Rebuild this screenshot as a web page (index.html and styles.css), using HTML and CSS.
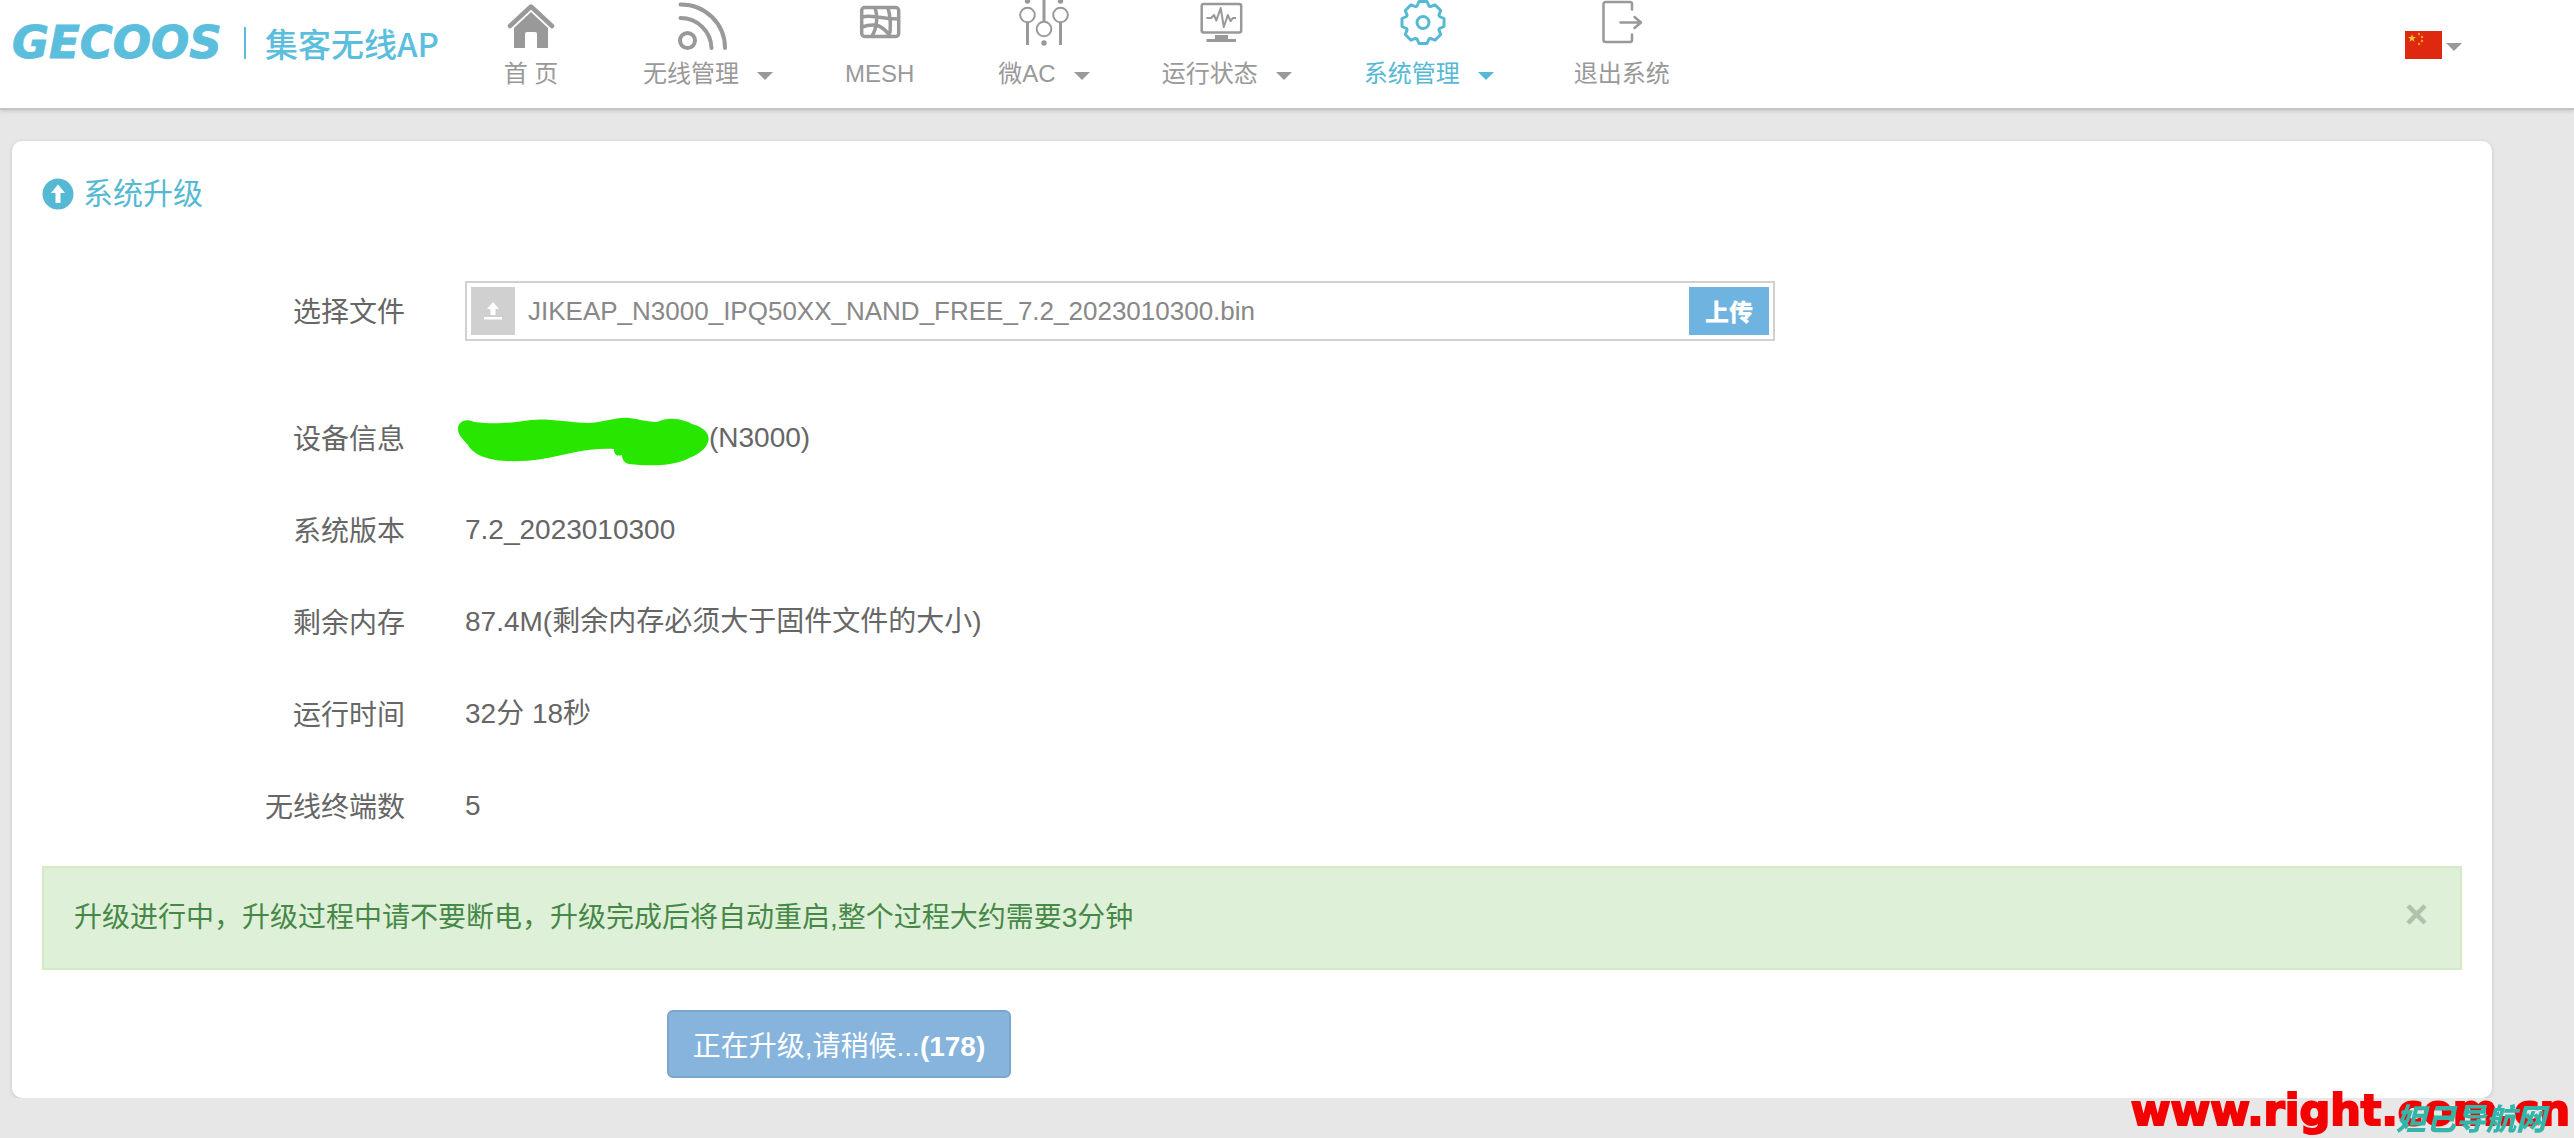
FILE: index.html
```html
<!DOCTYPE html>
<html lang="zh-CN">
<head>
<meta charset="utf-8">
<meta name="viewport" content="width=device-width, initial-scale=1">
<title>系统升级</title>
<link rel="stylesheet" href="styles.css">
</head>
<body>
<header class="topbar">
  <a class="brand" href="#">
    <span class="brand-name">GECOOS</span>
    <span class="brand-divider"></span>
    <span class="brand-product">集客无线AP</span>
  </a>
  <nav class="nav">
    <a class="nav-item" href="#">
      <svg class="nav-icon" viewBox="0 0 56 56" aria-hidden="true"><path d="M7 26 28 6.500 49 26" fill="none" stroke="currentColor" stroke-width="4.500" stroke-linecap="round" stroke-linejoin="round"/><path d="M28 12 45 28V48H34V34a2 2 0 0 0-2-2h-8a2 2 0 0 0-2 2V48H11V28Z" fill="currentColor"/></svg>
      <span class="nav-label">首 页</span>
    </a>
    <a class="nav-item has-menu" href="#">
      <svg class="nav-icon" viewBox="0 0 56 56" aria-hidden="true"><g fill="none" stroke="currentColor" stroke-width="4" stroke-linecap="round"><circle cx="13.500" cy="40.500" r="7.500"/><path d="M6.500 18A31 31 0 0 1 37.500 48M6.500 4.500A44 44 0 0 1 51 48"/></g></svg>
      <span class="nav-label">无线管理<i class="caret"></i></span>
    </a>
    <a class="nav-item" href="#">
      <svg class="nav-icon" viewBox="0 0 56 56" aria-hidden="true"><g fill="none" stroke="currentColor" stroke-width="3.500"><rect x="9.700" y="7.500" width="37" height="29" rx="3"/><path d="M23 8C26 16 25 28 20 36M36 8C38 15 39 23 38 33M10 17C20 14 26 19 47 19M10 27C24 22 31 26 39 37"/></g></svg>
      <span class="nav-label">MESH</span>
    </a>
    <a class="nav-item has-menu" href="#">
      <svg class="nav-icon" viewBox="0 0 56 56" aria-hidden="true"><g fill="none" stroke="currentColor" stroke-width="2"><circle cx="17.500" cy="15" r="7.300"/><circle cx="34" cy="29" r="7.300"/><circle cx="50.500" cy="15" r="7.300"/><path d="M17.500 22.500V45M50.500 22.500V45M34 0V21.500" stroke-width="3"/></g><g fill="currentColor"><circle cx="17.500" cy="1" r="2.700"/><circle cx="50.500" cy="1" r="2.700"/><circle cx="34" cy="43" r="2.700"/></g></svg>
      <span class="nav-label">微AC<i class="caret"></i></span>
    </a>
    <a class="nav-item has-menu" href="#">
      <svg class="nav-icon" viewBox="0 0 56 56" aria-hidden="true"><g fill="none" stroke="currentColor" stroke-width="2.500" stroke-linejoin="round"><rect x="8.700" y="4" width="39.500" height="28.500" rx="2"/><path d="M13.400 18H18.200L21 15 23.300 20.600 27.700 8 30.800 27 34.800 15 37.500 21 40 18H43" stroke-width="2"/></g><path d="M22 35H35V39H43V42H13.500V39H22Z" fill="currentColor"/></svg>
      <span class="nav-label">运行状态<i class="caret"></i></span>
    </a>
    <a class="nav-item has-menu is-active" href="#" aria-current="page">
      <svg class="nav-icon" viewBox="0 0 56 56" aria-hidden="true"><g transform="translate(28 22.500)" fill="none" stroke="currentColor" stroke-width="3" stroke-linejoin="round"><path d="M-4-21 4-21 6-16.500 7.400-15.900 12-17.700 17.700-12 15.900-7.400 16.500-6 21-4 21 4 16.500 6 15.900 7.400 17.700 12 12 17.700 7.400 15.900 6 16.500 4 21-4 21-6 16.500-7.400 15.900-12 17.700-17.700 12-15.900 7.400-16.500 6-21 4-21-4-16.500-6-15.900-7.400-17.700-12-12-17.700-7.400-15.900-6-16.500Z"/><circle r="6"/></g></svg>
      <span class="nav-label">系统管理<i class="caret"></i></span>
    </a>
    <a class="nav-item nav-logout" href="#">
      <svg class="nav-icon" viewBox="0 0 56 56" aria-hidden="true"><g fill="none" stroke="currentColor" stroke-width="2.500" stroke-linecap="round" stroke-linejoin="round"><path d="M38 9.500V4a2 2 0 0 0-2-2H11.500a2 2 0 0 0-2 2V40a2 2 0 0 0 2 2H36a2 2 0 0 0 2-2V34.500M26.500 22.500H47M40.500 17 47 22.500 40.500 28"/></g></svg>
      <span class="nav-label">退出系统</span>
    </a>
  </nav>
  <button class="language" type="button" aria-label="中文">
    <svg class="flag" viewBox="0 0 37 28" aria-hidden="true"><path d="M0 0H37V28H0Z" fill="#de2910"/><path d="M7 3 8 6H11L8.600 7.800 9.500 10.800 7 9 4.500 10.800 5.400 7.800 3 6H6Z" fill="#fc3"/><g fill="#f9a51a"><circle cx="14" cy="3" r="1.200"/><circle cx="17" cy="6" r="1.200"/><circle cx="17" cy="10" r="1.200"/><circle cx="14" cy="13" r="1.200"/></g></svg>
    <i class="caret"></i>
  </button>
</header>

<main class="panel">
  <h1 class="panel-title">
    <svg class="title-icon" viewBox="0 0 32 32" aria-hidden="true"><circle cx="16" cy="16" r="15.500" fill="currentColor"/><path d="M16 6.500 23 15H18.500V25H13.500V15H9Z" fill="#fff"/></svg>
    系统升级
  </h1>

  <form class="upgrade">
    <div class="row row-file">
      <label class="row-label" for="firmware">选择文件</label>
      <div class="file-box">
        <span class="file-icon"><svg viewBox="0 0 20 20" aria-hidden="true"><path d="M10 1 16 8H12.500V14H7.500V8H4ZM1 16H19V18.500H1Z" fill="#fff"/></svg></span>
        <input class="file-name" id="firmware" type="text" readonly value="JIKEAP_N3000_IPQ50XX_NAND_FREE_7.2_2023010300.bin">
        <button class="file-upload" type="button">上传</button>
      </div>
    </div>
    <dl class="facts">
      <div class="row">
        <dt class="row-label">设备信息</dt>
        <dd class="row-value device">
          <svg class="redaction" viewBox="0 0 252 50" aria-hidden="true"><path d="M1 12C1 4 10 1 17 5 42 8 58 5 74 3 90 1 108 5 132 6 150 5 158 0 172 1 182 2 190 5 200 5 215-2 230 4 235 7 260 14 255 32 232 41 216 50 190 49 172 47 167 46 165 42 165 38 158 40 157 36 157 32 135 30 110 37 85 42 50 47 20 44 11 28 7 23 1 19 1 12Z" fill="#27e600"/></svg>(N3000)
        </dd>
      </div>
      <div class="row"><dt class="row-label">系统版本</dt><dd class="row-value">7.2_2023010300</dd></div>
      <div class="row"><dt class="row-label">剩余内存</dt><dd class="row-value">87.4M(剩余内存必须大于固件文件的大小)</dd></div>
      <div class="row"><dt class="row-label">运行时间</dt><dd class="row-value">32分 18秒</dd></div>
      <div class="row"><dt class="row-label">无线终端数</dt><dd class="row-value">5</dd></div>
    </dl>
    <div class="alert" role="status">
      <span>升级进行中，升级过程中请不要断电，升级完成后将自动重启,整个过程大约需要3分钟</span>
      <button class="alert-close" type="button" aria-label="关闭">×</button>
    </div>
    <button class="submit" type="submit" disabled>正在升级,请稍候...<b>(178)</b></button>
  </form>
</main>

<div class="watermark">
  <span class="watermark-url">www.right.com.cn</span>
  <span class="watermark-site">妲己导航网</span>
</div>
</body>
</html>
```

FILE: styles.css
```css
* {
  box-sizing: border-box;
}

body {
  margin: 0;
  background: #e7e7e7;
  color: #666;
  font: 28px/40px "Liberation Sans", "Noto Sans CJK SC", sans-serif;
}

button,
input {
  font-family: inherit;
}

a {
  color: inherit;
  text-decoration: none;
}

.topbar {
  display: flex;
  align-items: flex-start;
  min-height: 110px;
  padding: 0 112px 0 12px;
  background: #fff;
  border-bottom: 2px solid #c4c4c4;
  box-shadow: 0 1px 4px rgba(0, 0, 0, 0.15);
}

.brand {
  display: flex;
  align-items: center;
  width: 491px;
  padding-top: 18px;
  color: #5bbedc;
  line-height: 50px;
  white-space: nowrap;
}

.brand-name {
  width: 232px;
  font: italic bold 45px/50px "DejaVu Sans", sans-serif;
  -webkit-text-stroke: 1px currentColor;
}

.brand-divider {
  width: 2px;
  height: 32px;
  margin-right: 19px;
  background: currentColor;
}

.brand-product {
  font: 500 33px/48px "Noto Sans CJK SC", sans-serif;
}

.nav {
  display: flex;
  flex: 1;
  gap: 72px;
  color: #999;
  font-size: 24px;
  line-height: 36px;
  white-space: nowrap;
}

.nav-item {
  display: flex;
  flex-direction: column;
  align-items: center;
  margin-right: 12px;
}

.nav-item.has-menu {
  margin-right: 0;
}

.nav-icon {
  width: 56px;
  height: 56px;
  overflow: visible;
}

.has-menu .nav-icon {
  margin-right: 12px;
}

.nav-label {
  display: flex;
  align-items: center;
  white-space: pre;
}

.nav-logout {
  margin-left: 8px;
}

.is-active {
  color: #56b9d4;
}

.caret {
  border: 8px solid transparent;
  border-top-color: currentColor;
  border-bottom: 0;
}

.nav-label .caret {
  margin: 4px 0 0 18px;
}

.language {
  display: flex;
  align-items: center;
  gap: 4px;
  margin-top: 31px;
  padding: 0;
  border: 0;
  background: none;
  color: #999;
}

.language .caret {
  margin-top: 4px;
}

.flag {
  width: 37px;
  height: 28px;
}

.panel {
  margin: 31px 82px 0 12px;
  padding: 28px 30px 20px 30px;
  border-radius: 10px;
  background: #fff;
  box-shadow: 0 1px 4px rgba(0, 0, 0, 0.15);
}

.panel-title {
  display: flex;
  align-items: center;
  gap: 9px;
  margin: 0 0 62px;
  color: #56b9d4;
  font-size: 30px;
  font-weight: 400;
  line-height: 50px;
}

.title-icon {
  width: 32px;
  height: 32px;
}

.row {
  display: grid;
  grid-template-columns: 363px minmax(0, 1fr);
  gap: 60px;
  align-items: center;
  min-height: 92px;
}

.row-file {
  min-height: 60px;
  margin-bottom: 51px;
}

.row-label {
  padding-top: 4px;
  text-align: right;
}

.row-value {
  margin: 0;
}

.facts {
  margin: 0 0 14px;
}

.device {
  display: flex;
  align-items: center;
}

.redaction {
  width: 252px;
  height: 50px;
  margin: 8px 0 0 -8px;
}

.file-box {
  display: flex;
  max-width: 1310px;
  height: 60px;
  padding: 4px;
  border: 2px solid #d0d0d0;
}

.file-icon {
  display: flex;
  flex: none;
  align-items: center;
  justify-content: center;
  width: 44px;
  background: #d0d0d0;
}

.file-icon svg {
  width: 20px;
  height: 20px;
}

.file-name {
  flex: 1;
  min-width: 0;
  padding: 0 13px;
  border: 0;
  background: none;
  color: #888;
  font-size: 26px;
}

.file-upload {
  width: 80px;
  padding: 0;
  border: 0;
  background: #6fb3e0;
  color: #fff;
  font: 900 24px/46px "Noto Sans CJK SC", sans-serif;
}

.alert {
  display: flex;
  align-items: center;
  justify-content: space-between;
  min-height: 104px;
  margin-bottom: 40px;
  padding: 0 32px 0 30px;
  border: 2px solid #d6e9c6;
  background: #dff0d8;
  color: #468847;
}

.alert-close {
  padding: 0 0 8px;
  border: 0;
  background: none;
  color: #b2c0ad;
  font-size: 40px;
  font-weight: 700;
  line-height: 48px;
}

.submit {
  display: block;
  min-width: 344px;
  height: 68px;
  margin-left: 625px;
  padding: 0 20px;
  border: 2px solid #7ba6cc;
  border-radius: 6px;
  background: #86b4dc;
  color: #fff;
  font-size: 28px;
}

/* Site stamp laid over the lower right corner of the page */
.watermark {
  position: fixed;
  right: 4px;
  bottom: 0;
  line-height: 44px;
  white-space: nowrap;
}

.watermark-url {
  color: #f40000;
  font: bold 43px/44px "DejaVu Sans", sans-serif;
  -webkit-text-stroke: 2px #f40000;
}

.watermark-site {
  position: absolute;
  right: 24px;
  bottom: 4px;
  color: #34b5a9;
  font: italic 900 30px/34px "Noto Sans CJK SC", sans-serif;
}
```
